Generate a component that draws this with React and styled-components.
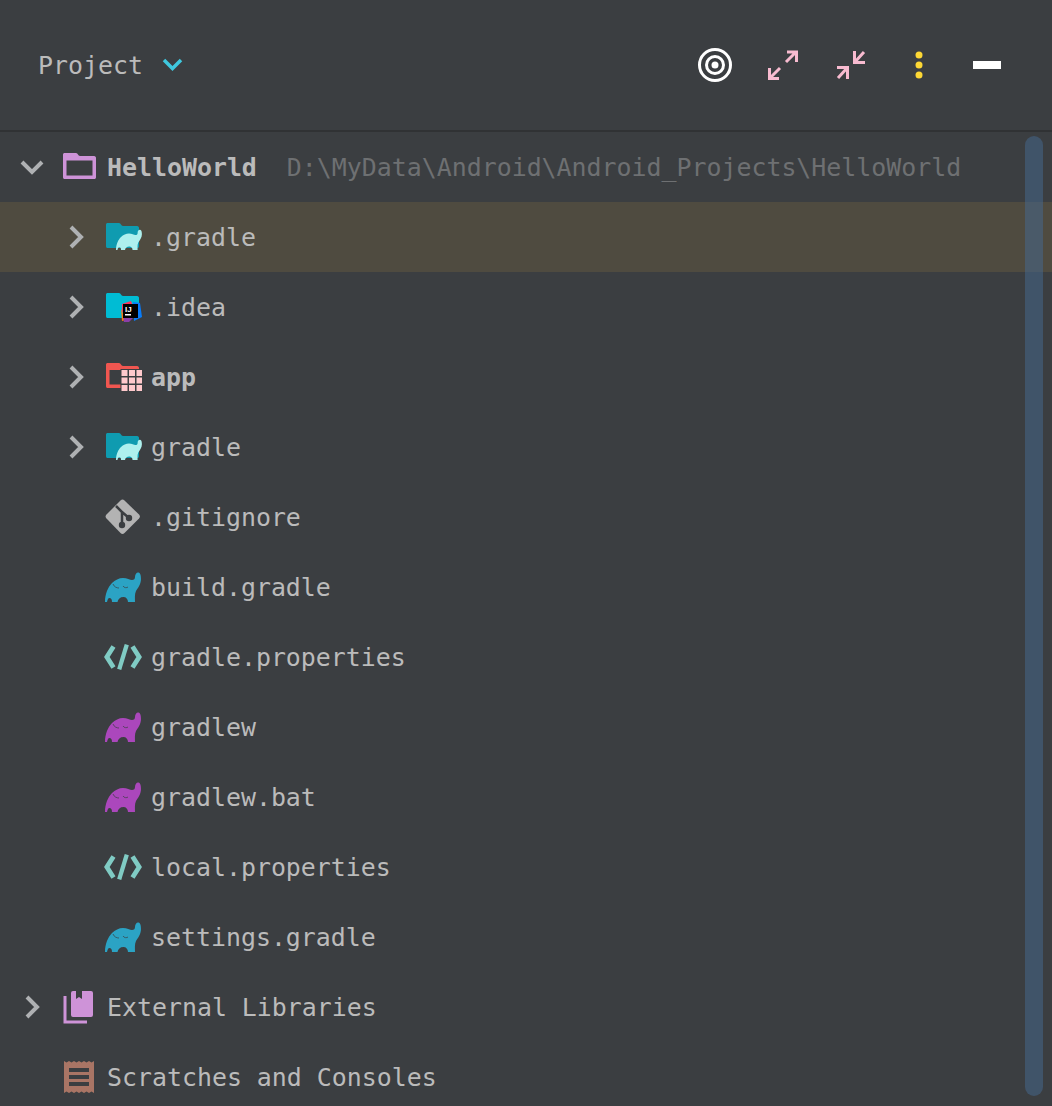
import React from "react";
import styled, { createGlobalStyle } from "styled-components";

const GlobalStyle = createGlobalStyle`
  html, body {
    margin: 0;
    padding: 0;
    background: #3b3e41;
  }
`;

const Panel = styled.div`
  position: relative;
  width: 1052px;
  height: 1106px;
  overflow: hidden;
  background: #3b3e41;
  color: #bbbbbb;
  font-family: "DejaVu Sans Mono", "Liberation Mono", monospace;
  font-size: 24.9px;
`;

const Header = styled.header`
  display: flex;
  align-items: center;
  justify-content: space-between;
  height: 132px;
  padding: 0 47px 0 38px;
  box-sizing: border-box;
  border-bottom: 2px solid #303234;
`;

const Title = styled.div`
  display: flex;
  align-items: center;
  gap: 18px;
`;

const Toolbar = styled.div`
  display: flex;
  align-items: center;
  gap: 32px;
`;

const ToolIcon = styled.svg`
  display: block;
  width: 36px;
  height: 36px;
`;

const Tree = styled.ul`
  list-style: none;
  margin: 0;
  padding: 0;
`;

const Row = styled.li`
  display: flex;
  align-items: center;
  height: 70px;
  padding-left: ${(props) => (props.$depth ? 54 : 10)}px;
  background: ${(props) => (props.$selected ? "#4f4b40" : "transparent")};
`;

const Arrow = styled.svg`
  flex: none;
  width: 44px;
  height: 44px;
`;

const ArrowSlot = styled.span`
  flex: none;
  width: 44px;
`;

const IconSlot = styled.span`
  flex: none;
  display: flex;
  align-items: center;
  justify-content: center;
  width: 38px;
  height: 38px;
  margin: 0 9px 0 6px;
`;

const Label = styled.span`
  white-space: nowrap;
  font-weight: ${(props) => (props.$bold ? 700 : 400)};
`;

const Hint = styled.span`
  margin-left: 30px;
  white-space: nowrap;
  color: #6e7072;
`;

const ScrollThumb = styled.div`
  position: absolute;
  top: 136px;
  left: 1025px;
  width: 18px;
  height: 960px;
  border-radius: 9px;
  background: rgba(70, 105, 145, 0.5);
`;

const ELEPHANT =
  "M0 30 C0 22 3 15 7 11 C10 8 14 6 18 6 C22 6 25 8 27 8 C29 8 30 7 30 5 C30 2 32 0 33.500 0.500 C35.500 1 36 4 36 7 C36 12 33 16 31 19 C29.500 22 30 26 30 30 L23 30 C23 27 21 25 18.500 25 C15 25 13 27 12.500 30 L7 30 C7 27 6 26 4.500 26 C3 26 2.500 28 2 30 Z";

const Elephant = ({ fill }) => (
  <svg width="36" height="30" viewBox="0 0 36 30">
    <path d={ELEPHANT} fill={fill} />
    <path d="M8 12 C9 15 12 16 14 16 M18 14 C19 16 22 16 23 15" fill="none" stroke="#3b3e41" strokeOpacity="0.7" strokeWidth="1" />
  </svg>
);

const FOLDER =
  "M2 1 H13 C15 1 15 4 17 4 H31 C32.500 4 33 5 33 6 V24 C33 25.500 32.500 26 31 26 H2 C0.500 26 0 25.500 0 24 V3 C0 1.500 0.500 1 2 1 Z";

const GradleFolder = () => (
  <svg width="38" height="30" viewBox="0 0 38 30">
    <path d={FOLDER} fill="#0f9bb0" transform="translate(2 0)" />
    <path d={ELEPHANT} fill="#aef0ee" transform="translate(12 7.500) scale(0.72 0.68)" />
  </svg>
);

const IdeaFolder = () => (
  <svg width="38" height="30" viewBox="0 0 38 30">
    <path d={FOLDER} fill="#00bcd4" transform="translate(2 0)" />
    <path d="M18 12 L27 9 L29 14 L18 20 Z" fill="#fe315d" />
    <path d="M29 10 L36 11 L38 25 L30 29 Z" fill="#087cfa" />
    <path d="M17 17 L22 28 L18 29 Z" fill="#f97a12" />
    <path d="M19 24 L31 24 L25 30 L20 30 Z" fill="#8a3ea8" />
    <rect x="19" y="12" width="15" height="14" fill="#000000" />
    <text x="21" y="20" fontSize="8" fontWeight="700" fill="#ffffff" fontFamily="Liberation Sans, sans-serif">IJ</text>
    <rect x="21" y="22" width="6" height="1.500" fill="#ffffff" />
  </svg>
);

const ModuleFolder = () => (
  <svg width="38" height="30" viewBox="0 0 38 30">
    <path
      d="M4 1 H15 C17 1 17 4 19 4 H33 C34.500 4 35 5 35 6 V24 C35 25.500 34.500 26 33 26 H4 C2.500 26 2 25.500 2 24 V3 C2 1.500 2.500 1 4 1 Z M5.500 8 V22.500 H32 V8 Z"
      fill="#f05650"
      fillRule="evenodd"
    />
    <rect x="16.500" y="7" width="21.500" height="23" fill="#3b3e41" />
    {[17.5, 25, 32.500].map((x) =>
      [8, 15.500, 23].map((y) => (
        <rect key={`${x}-${y}`} x={x} y={y} width="6" height="6" fill="#ffc9cc" />
      ))
    )}
  </svg>
);

const ProjectFolder = () => (
  <svg width="38" height="30" viewBox="0 0 38 30">
    <path
      d="M5 1 H16 C18 1 18 4 20 4 H34 C35.500 4 36 5 36 6 V25 C36 26.500 35.500 27 34 27 H5 C3.500 27 3 26.500 3 25 V3 C3 1.500 3.500 1 5 1 Z M6.500 8.500 V23.500 H32.500 V8.500 Z"
      fill="#ce93d8"
      fillRule="evenodd"
    />
  </svg>
);

const GitIcon = () => (
  <svg width="36" height="36" viewBox="0 0 36 36">
    <path d="M15.500 1.500 a3 3 0 0 1 4 0 L34 15.500 a3 3 0 0 1 0 4 L19.500 34 a3 3 0 0 1 -4 0 L1.500 19.500 a3 3 0 0 1 0 -4 Z" fill="#b3b3b3" />
    <path d="M11 7 L17 13 V26 M17 13 L24 19" fill="none" stroke="#3b3e41" strokeWidth="2.500" />
    <circle cx="17" cy="26" r="3.200" fill="#3b3e41" />
    <circle cx="24" cy="19" r="3.200" fill="#3b3e41" />
  </svg>
);

const CodeIcon = () => (
  <svg width="40" height="28" viewBox="0 0 40 28">
    <path d="M10 3 L3 14 L10 25 M30 3 L37 14 L30 25" fill="none" stroke="#80cbc4" strokeWidth="5" />
    <path d="M16 27 L24 1" fill="none" stroke="#80cbc4" strokeWidth="4.500" />
  </svg>
);

const LibrariesIcon = () => (
  <svg width="32" height="34" viewBox="0 0 32 34">
    <path d="M2 6 V32 H24" fill="none" stroke="#ce93d8" strokeWidth="3" />
    <path d="M8 3 a2 2 0 0 1 2 -2 H13 V9 L16 7 L19 9 V1 H28 a2 2 0 0 1 2 2 V25 a2 2 0 0 1 -2 2 H10 a2 2 0 0 1 -2 -2 Z" fill="#ce93d8" />
  </svg>
);

const ScratchIcon = () => (
  <svg width="30" height="32" viewBox="0 0 30 32">
    <path
      d="M0 0 L2.500 1.500 L5 0 L7.500 1.500 L10 0 L12.500 1.500 L15 0 L17.500 1.500 L20 0 L22.500 1.500 L25 0 L27.500 1.500 L30 0 V32 L27.500 30.500 L25 32 L22.500 30.500 L20 32 L17.500 30.500 L15 32 L12.500 30.500 L10 32 L7.500 30.500 L5 32 L2.500 30.500 L0 32 Z"
      fill="#a97565"
    />
    <rect x="5" y="7" width="20" height="4" fill="#3b3e41" />
    <rect x="5" y="14" width="20" height="4" fill="#3b3e41" />
    <rect x="5" y="21" width="20" height="4" fill="#3b3e41" />
  </svg>
);

const rows = [
  { depth: 0, open: true, icon: <ProjectFolder />, label: "HelloWorld", bold: true, hint: "D:\\MyData\\Android\\Android_Projects\\HelloWorld" },
  { depth: 1, closed: true, selected: true, icon: <GradleFolder />, label: ".gradle" },
  { depth: 1, closed: true, icon: <IdeaFolder />, label: ".idea" },
  { depth: 1, closed: true, icon: <ModuleFolder />, label: "app", bold: true },
  { depth: 1, closed: true, icon: <GradleFolder />, label: "gradle" },
  { depth: 1, icon: <GitIcon />, label: ".gitignore" },
  { depth: 1, icon: <Elephant fill="#2ba3c4" />, label: "build.gradle" },
  { depth: 1, icon: <CodeIcon />, label: "gradle.properties" },
  { depth: 1, icon: <Elephant fill="#ab47bc" />, label: "gradlew" },
  { depth: 1, icon: <Elephant fill="#ab47bc" />, label: "gradlew.bat" },
  { depth: 1, icon: <CodeIcon />, label: "local.properties" },
  { depth: 1, icon: <Elephant fill="#2ba3c4" />, label: "settings.gradle" },
  { depth: 0, closed: true, icon: <LibrariesIcon />, label: "External Libraries" },
  { depth: 0, icon: <ScratchIcon />, label: "Scratches and Consoles" },
];

const TreeArrow = ({ open }) => (
  <Arrow viewBox="0 0 44 44">
    <path
      d={open ? "M12 17 L22 27 L32 17" : "M17 12 L27 22 L17 32"}
      fill="none"
      stroke="#afb1b3"
      strokeWidth="4"
    />
  </Arrow>
);

export default function App() {
  return (
    <Panel>
      <GlobalStyle />
      <Header>
        <Title>
          <span>Project</span>
          <svg width="24" height="24" viewBox="0 0 24 24">
            <path d="M3 7 L11.500 15.500 L20 7" fill="none" stroke="#3fc8de" strokeWidth="3.500" />
          </svg>
        </Title>
        <Toolbar>
          <ToolIcon viewBox="0 0 36 36">
            <circle cx="18" cy="18" r="15.500" fill="none" stroke="#ffffff" strokeWidth="3" />
            <circle cx="18" cy="18" r="8.500" fill="none" stroke="#ffffff" strokeWidth="3" />
            <circle cx="18" cy="18" r="3.500" fill="#ffffff" />
          </ToolIcon>
          <ToolIcon viewBox="0 0 36 36">
            <path d="M22 5 H31.500 V15 M31 5 L21 15 M14 31.500 H4.500 V21 M5 31 L15 21" fill="none" stroke="#f8bbd0" strokeWidth="3" />
          </ToolIcon>
          <ToolIcon viewBox="0 0 36 36">
            <path d="M21.500 4 V15.500 H32 M21.500 15.500 L31 5 M14.500 32 V20.500 H4 M14.500 20.500 L5 31" fill="none" stroke="#f8bbd0" strokeWidth="3" />
          </ToolIcon>
          <ToolIcon viewBox="0 0 36 36">
            <circle cx="18" cy="8" r="3.500" fill="#fdd835" />
            <circle cx="18" cy="18" r="3.500" fill="#fdd835" />
            <circle cx="18" cy="28" r="3.500" fill="#fdd835" />
          </ToolIcon>
          <ToolIcon viewBox="0 0 36 36">
            <rect x="4" y="14" width="28" height="8" fill="#ffffff" />
          </ToolIcon>
        </Toolbar>
      </Header>
      <Tree>
        {rows.map((row) => (
          <Row key={row.label} $depth={row.depth} $selected={row.selected}>
            {row.open || row.closed ? <TreeArrow open={row.open} /> : <ArrowSlot />}
            <IconSlot>{row.icon}</IconSlot>
            <Label $bold={row.bold}>{row.label}</Label>
            {row.hint && <Hint>{row.hint}</Hint>}
          </Row>
        ))}
      </Tree>
      <ScrollThumb />
    </Panel>
  );
}
